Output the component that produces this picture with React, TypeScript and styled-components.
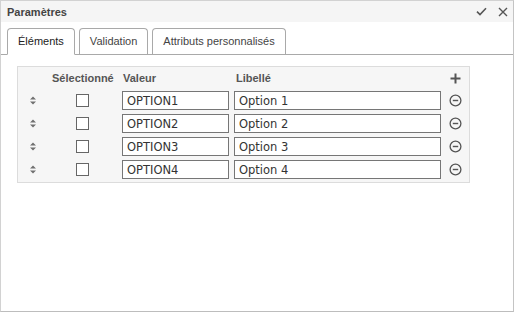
import React from 'react';
import styled, { createGlobalStyle } from 'styled-components';

const GlobalStyle = createGlobalStyle`
  html, body {
    margin: 0;
    padding: 0;
    background: #ffffff;
  }
  * {
    box-sizing: border-box;
  }
`;

const Window = styled.div`
  width: 514px;
  height: 312px;
  border: 1px solid #d2d2d2;
  border-bottom-color: #bdbdbd;
  border-right-color: #c4c4c4;
  background: #ffffff;
  display: flex;
  flex-direction: column;
  font-family: 'Liberation Sans', Arial, sans-serif;
`;

const TitleBar = styled.div`
  height: 21px;
  background: #f5f5f5;
  display: flex;
  align-items: center;
  padding: 0 5px 0 6px;
`;

const Title = styled.div`
  flex: 1;
  font-size: 11px;
  font-weight: bold;
  color: #444;
`;

const TitleActions = styled.div`
  display: flex;
  align-items: center;
  gap: 11px;
`;

const TabStrip = styled.div`
  display: flex;
  gap: 4px;
  padding: 6px 0 0 6px;
  border-bottom: 1px solid #a9a9a9;
`;

const Tab = styled.div<{ $active?: boolean }>`
  height: ${(p) => (p.$active ? '27px' : '26px')};
  margin-bottom: ${(p) => (p.$active ? '-1px' : '0')};
  padding: 0 10px;
  display: flex;
  align-items: center;
  border: 1px solid #a9a9a9;
  border-bottom: ${(p) => (p.$active ? '1px solid #ffffff' : 'none')};
  border-radius: 4px 4px 0 0;
  background: #ffffff;
  font-size: 11px;
  color: ${(p) => (p.$active ? '#222' : '#444')};
  padding-bottom: ${(p) => (p.$active ? '2px' : '1px')};
`;

const Content = styled.div`
  padding: 11px 0 0 16px;
`;

const Panel = styled.div`
  width: 453px;
  border: 1px solid #dcdcdc;
  background: #f6f6f6;
  display: grid;
  grid-template-columns: 30px 74px 112px 207px 28px;
  grid-template-rows: 22px repeat(4, 23px);
  padding-bottom: 1px;
`;

const HeadCell = styled.div<{ $pad?: number }>`
  display: flex;
  align-items: center;
  padding-left: ${(p) => p.$pad ?? 0}px;
  font-size: 11px;
  font-weight: bold;
  color: #555;
`;

const Cell = styled.div<{ $center?: boolean; $pad?: number }>`
  display: flex;
  align-items: center;
  justify-content: ${(p) => (p.$center ? 'center' : 'flex-start')};
  padding-left: ${(p) => p.$pad ?? 0}px;
`;

const Check = styled.input`
  appearance: none;
  margin: 0;
  width: 13px;
  height: 13px;
  border: 1px solid #666;
  background: #fff;
`;

const TextBox = styled.input<{ $w: number }>`
  width: ${(p) => p.$w}px;
  height: 19px;
  margin: 0;
  padding: 0 4px;
  border: 1px solid #767676;
  background: #fff;
  font-family: 'DejaVu Sans', Verdana, sans-serif;
  font-size: 11.5px;
  color: #333;
  outline: none;
`;

const IconButton = styled.span`
  display: inline-flex;
  align-items: center;
  justify-content: center;
  color: #555;
  cursor: pointer;
`;

const CheckIcon = () => (
  <svg width="11" height="9" viewBox="0 0 11 9">
    <path d="M1 4.6 L4 7.5 L10 1.3" fill="none" stroke="#555" strokeWidth="1.6" />
  </svg>
);

const CloseIcon = () => (
  <svg width="10" height="10" viewBox="0 0 10 10">
    <path d="M1 1 L9 9 M9 1 L1 9" fill="none" stroke="#555" strokeWidth="1.4" />
  </svg>
);

const SortIcon = () => (
  <svg width="6" height="9" viewBox="0 0 6 9">
    <path d="M0 3.5 L3 0.5 L6 3.5 Z M0 5.5 L3 8.5 L6 5.5 Z" fill="#707070" />
  </svg>
);

const PlusIcon = () => (
  <svg width="11" height="11" viewBox="0 0 11 11">
    <path d="M5.5 0.5 V10.5 M0.5 5.5 H10.5" stroke="#555" strokeWidth="2" />
  </svg>
);

const MinusCircleIcon = () => (
  <svg width="13" height="13" viewBox="0 0 13 13">
    <circle cx="6.5" cy="6.5" r="5.4" fill="none" stroke="#555" strokeWidth="1.3" />
    <path d="M3.8 6.5 H9.2" stroke="#555" strokeWidth="1.4" />
  </svg>
);

const options = [
  { value: 'OPTION1', label: 'Option 1' },
  { value: 'OPTION2', label: 'Option 2' },
  { value: 'OPTION3', label: 'Option 3' },
  { value: 'OPTION4', label: 'Option 4' },
];

const App: React.FC = () => {
  return (
    <>
      <GlobalStyle />
      <Window>
        <TitleBar>
          <Title>Paramètres</Title>
          <TitleActions>
            <IconButton><CheckIcon /></IconButton>
            <IconButton><CloseIcon /></IconButton>
          </TitleActions>
        </TitleBar>
        <TabStrip>
          <Tab $active>Éléments</Tab>
          <Tab>Validation</Tab>
          <Tab>Attributs personnalisés</Tab>
        </TabStrip>
        <Content>
          <Panel>
            <HeadCell />
            <HeadCell $pad={4}>Sélectionné</HeadCell>
            <HeadCell $pad={1}>Valeur</HeadCell>
            <HeadCell $pad={2}>Libellé</HeadCell>
            <Cell $center>
              <IconButton><PlusIcon /></IconButton>
            </Cell>
            {options.map((o) => (
              <React.Fragment key={o.value}>
                <Cell $center>
                  <SortIcon />
                </Cell>
                <Cell $pad={28}>
                  <Check type="checkbox" />
                </Cell>
                <Cell>
                  <TextBox $w={107} defaultValue={o.value} />
                </Cell>
                <Cell>
                  <TextBox $w={207} defaultValue={o.label} />
                </Cell>
                <Cell $center>
                  <IconButton><MinusCircleIcon /></IconButton>
                </Cell>
              </React.Fragment>
            ))}
          </Panel>
        </Content>
      </Window>
    </>
  );
};

export default App;
